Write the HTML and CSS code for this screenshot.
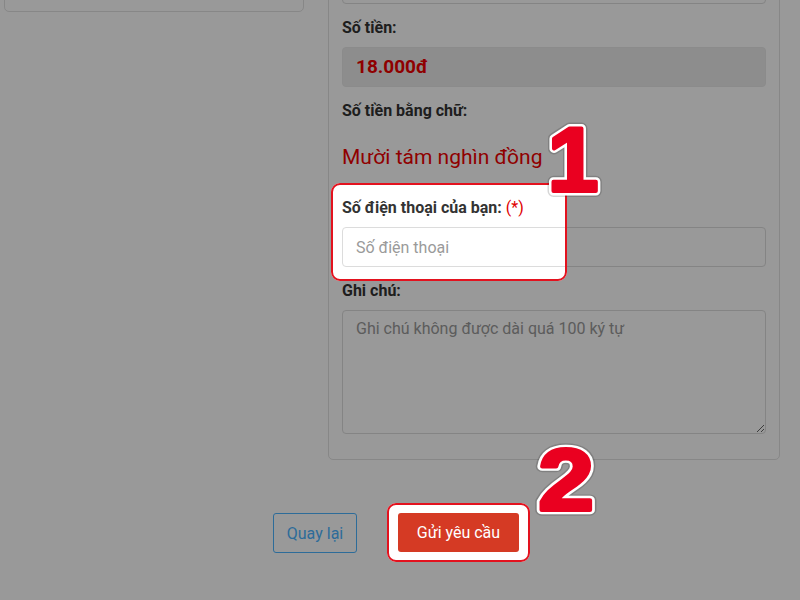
FILE: index.html
```html
<!DOCTYPE html>
<html lang="vi">
<head>
<meta charset="utf-8">
<title>Gửi yêu cầu</title>
<link rel="stylesheet" href="styles.css">
</head>
<body>
<div class="page">
  <div class="col-left">
    <div class="card card-left"></div>
  </div>
  <div class="col-right">
    <div class="card card-right">
      <div class="group first">
        <input class="control" type="text" value="">
      </div>
      <div class="group">
        <label class="label">Số tiền:</label>
        <div class="amount">18.000đ</div>
      </div>
      <div class="group">
        <label class="label">Số tiền bằng chữ:</label>
        <div class="words">Mười tám nghìn đồng</div>
      </div>
      <div class="group">
        <label class="label">Số điện thoại của bạn: <span class="req">(*)</span></label>
        <input class="control" type="text" placeholder="Số điện thoại">
      </div>
      <div class="group last">
        <label class="label">Ghi chú:</label>
        <textarea class="control note" placeholder="Ghi chú không được dài quá 100 ký tự"></textarea>
      </div>
    </div>
  </div>
</div>
<div class="actions">
  <button class="btn btn-back" type="button">Quay lại</button>
  <button class="btn btn-send" type="button">Gửi yêu cầu</button>
</div>

<svg class="overlay" width="800" height="600" viewBox="0 0 800 600" xmlns="http://www.w3.org/2000/svg">
  <path class="dim" fill-rule="evenodd" d="M0 0H800V600H0Z
    M340 183H558A9 9 0 0 1 567 192V272A9 9 0 0 1 558 281H340A9 9 0 0 1 331 272V192A9 9 0 0 1 340 183Z
    M396 503H521A9 9 0 0 1 530 512V553A9 9 0 0 1 521 562H396A9 9 0 0 1 387 553V512A9 9 0 0 1 396 503Z"/>
  <rect class="ring" x="332" y="184" width="234" height="96" rx="8"/>
  <rect class="ring" x="388" y="504" width="141" height="57" rx="8"/>
  <g class="num">
    <text class="num-shade" x="573" y="191">1</text>
    <text class="num-edge" x="573" y="191">1</text>
    <text class="num-fill" x="573" y="191">1</text>
    <g class="two">
      <text class="num-shade" x="0" y="0">2</text>
      <text class="num-edge" x="0" y="0">2</text>
      <text class="num-fill" x="0" y="0">2</text>
    </g>
  </g>
</svg>
</body>
</html>
```

FILE: styles.css
```css
html, body {
  margin: 0;
  padding: 0;
  height: 600px;
  overflow: hidden;
  background: #ffffff;
  font-family: Roboto, "Liberation Sans", Arial, sans-serif;
  color: #333;
}
body {
  position: relative;
}
.page {
  display: flex;
  align-items: flex-start;
  padding-left: 4px;
  gap: 24px;
}
.col-left {
  width: 300px;
}
.col-right {
  width: 452px;
}
.card {
  box-sizing: border-box;
  border: 1px solid #e2e2e2;
  border-radius: 5px;
  background: #fff;
}
.card-left {
  height: 200px;
  margin-top: -188px;
}
.card-right {
  margin-top: -50px;
  padding: 13px 13px 25px;
}
.group {
  margin-bottom: 13px;
  display: flex;
  flex-direction: column;
}
.group.last {
  margin-bottom: 0;
}
.label {
  font-weight: 700;
  font-size: 16px;
  line-height: 22px;
  margin-bottom: 8px;
  color: #333;
}
.req {
  color: #e00000;
  font-weight: 400;
  font-size: 16px;
}
.control {
  box-sizing: border-box;
  height: 40px;
  width: 100%;
  border: 1px solid #dcdcdc;
  border-radius: 4px;
  padding: 0 13px;
  font-family: Roboto, "Liberation Sans", Arial, sans-serif;
  font-size: 16px;
  color: #333;
  background: #fff;
  outline: none;
  margin: 0;
}
.control::placeholder {
  color: #9a9a9a;
}
.note {
  height: 124px;
  padding-top: 6px;
  line-height: 24px;
  resize: vertical;
  display: block;
}
.amount {
  box-sizing: border-box;
  height: 40px;
  border: 1px solid #e8e8e8;
  border-radius: 4px;
  background: #ececec;
  color: #ee0000;
  font-weight: 700;
  font-size: 19px;
  line-height: 38px;
  padding-left: 13px;
}
.words {
  margin-top: 12px;
  margin-bottom: 12px;
  font-size: 21px;
  line-height: 30px;
  color: #f00000;
}
.actions {
  display: flex;
  justify-content: center;
  gap: 41px;
  margin-top: 53px;
  padding-right: 8px;
}
.btn {
  box-sizing: border-box;
  height: 40px;
  border-radius: 3px;
  font-family: Roboto, "Liberation Sans", Arial, sans-serif;
  font-size: 16px;
  cursor: pointer;
  padding: 0;
}
.btn-back {
  width: 84px;
  background: transparent;
  border: 1px solid #4cb4ff;
  color: #4cb4ff;
}
.btn-send {
  width: 121px;
  height: 39px;
  background: #d53a24;
  border: none;
  color: #fff;
}
.overlay {
  position: absolute;
  left: 0;
  top: 0;
  width: 800px;
  height: 600px;
  pointer-events: none;
}
.dim {
  fill: rgba(0, 0, 0, 0.4);
}
.ring {
  fill: none;
  stroke: #e3121e;
  stroke-width: 2;
}
.num text {
  font-family: "Liberation Sans", Arial, sans-serif;
  font-weight: 700;
  font-size: 91px;
  text-anchor: middle;
  stroke-linejoin: round;
}
.two {
  transform: translate(566px, 510px) scale(1.1, 0.95);
}
.num-shade {
  fill: none;
  stroke: rgba(0, 0, 0, 0.16);
  stroke-width: 12;
}
.num-edge {
  fill: #fff;
  stroke: #fff;
  stroke-width: 9;
}
.num-fill {
  fill: #ea0020;
  stroke: #ea0020;
  stroke-width: 4;
}
```
